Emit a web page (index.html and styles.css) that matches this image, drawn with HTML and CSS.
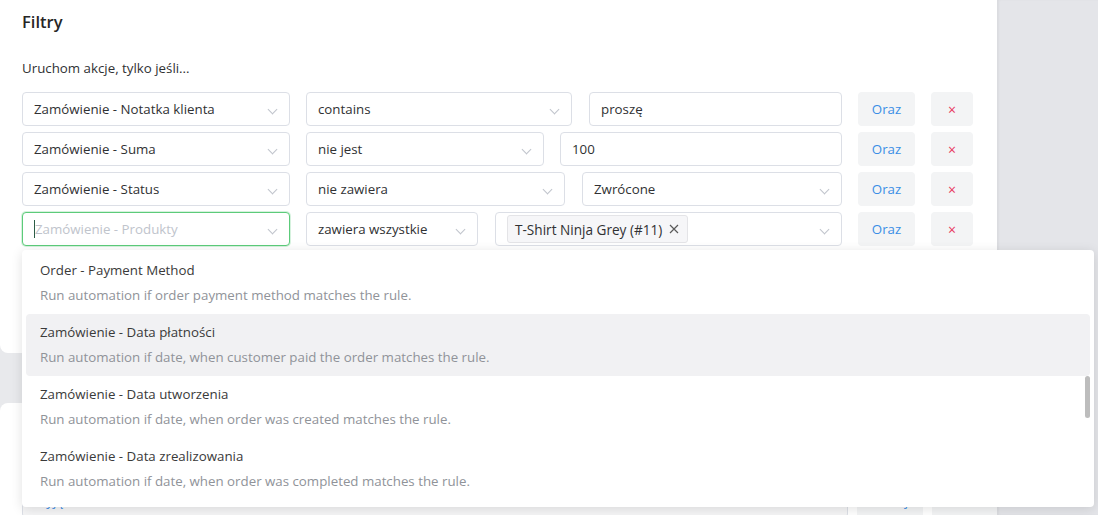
FILE: index.html
```html
<!doctype html>
<html lang="pl">
  <head>
    <meta charset="UTF-8" />
    <meta name="viewport" content="width=device-width, initial-scale=1.0" />
    <title>Filtry</title>
    <link rel="stylesheet" href="styles.css">
  </head>

  <body>
    <div class="layout">
      <main class="content">
        <section class="card card-filters">
          <h2 class="card-title">Filtry</h2>
          <p class="hint">Uruchom akcje, tylko jeśli...</p>

          <div class="rules">
            <div class="rule">
              <div class="field field-select field-subject">Zamówienie - Notatka klienta<span class="chevron"></span></div>
              <div class="field field-select op-contains">contains<span class="chevron"></span></div>
              <div class="field field-value">proszę</div>
              <button class="btn btn-and">Oraz</button>
              <button class="btn btn-remove">×</button>
            </div>

            <div class="rule">
              <div class="field field-select field-subject">Zamówienie - Suma<span class="chevron"></span></div>
              <div class="field field-select op-not">nie jest<span class="chevron"></span></div>
              <div class="field field-value">100</div>
              <button class="btn btn-and">Oraz</button>
              <button class="btn btn-remove">×</button>
            </div>

            <div class="rule">
              <div class="field field-select field-subject">Zamówienie - Status<span class="chevron"></span></div>
              <div class="field field-select op-not-contains">nie zawiera<span class="chevron"></span></div>
              <div class="field field-select field-value">Zwrócone<span class="chevron"></span></div>
              <button class="btn btn-and">Oraz</button>
              <button class="btn btn-remove">×</button>
            </div>

            <div class="rule">
              <div class="field field-select field-subject is-focused"><span class="caret"></span><span class="placeholder">Zamówienie - Produkty</span><span class="chevron"></span></div>
              <div class="field field-select op-all">zawiera wszystkie<span class="chevron"></span></div>
              <div class="field field-select field-value field-tags">
                <span class="tag">T-Shirt Ninja Grey (#11)
                  <svg class="tag-close" width="10" height="10" viewBox="0 0 10 10"><path d="M1 1L9 9M9 1L1 9" stroke="#5a5a5a" stroke-width="1.2" fill="none"/></svg>
                </span>
                <span class="chevron"></span>
              </div>
              <button class="btn btn-and">Oraz</button>
              <button class="btn btn-remove">×</button>
            </div>

            <div class="dropdown">
              <div class="option">
                <div class="option-title">Order - Payment Method</div>
                <div class="option-desc">Run automation if order payment method matches the rule.</div>
              </div>
              <div class="option is-hover">
                <div class="option-title">Zamówienie - Data płatności</div>
                <div class="option-desc">Run automation if date, when customer paid the order matches the rule.</div>
              </div>
              <div class="option">
                <div class="option-title">Zamówienie - Data utworzenia</div>
                <div class="option-desc">Run automation if date, when order was created matches the rule.</div>
              </div>
              <div class="option">
                <div class="option-title">Zamówienie - Data zrealizowania</div>
                <div class="option-desc">Run automation if date, when order was completed matches the rule.</div>
              </div>
              <div class="scroll-thumb"></div>
            </div>
          </div>
        </section>

        <section class="card card-actions">
          <div class="rule">
            <div class="field field-muted">Wyjątki</div>
            <button class="btn btn-and btn-wide">Dodaj</button>
            <button class="btn btn-and btn-wide">Usuń</button>
          </div>
        </section>
      </main>
      <aside class="sidebar"></aside>
    </div>
  </body>
</html>
```

FILE: styles.css
```css
body {
  margin: 0;
  font-family: 'Open Sans', 'Noto Sans', sans-serif;
  font-size: 13.3px;
  color: #303133;
  background: #e8e9ec;
  overflow: hidden;
}

.layout {
  display: flex;
  height: 515px;
  overflow: hidden;
}

.content {
  width: 997px;
  flex-shrink: 0;
  position: relative;
  z-index: 1;
}

.sidebar {
  flex: 1;
  background: #e4e5e9;
  box-shadow: inset 2px 0 2px rgba(0, 0, 0, 0.04);
}

.card {
  background: white;
  border-radius: 8px;
}

.card-filters {
  border-radius: 0 0 8px 8px;
  padding: 11px 24px 107px 22px;
}

.card-actions {
  margin-top: 50px;
  padding: 81px 0 20px 22px;
}

.card-title {
  margin: 0;
  font-size: 16.5px;
  font-weight: 600;
  line-height: 22px;
  color: #262626;
}

.hint {
  margin: 25px 0 14px;
  line-height: 20px;
}

.rules {
  position: relative;
  display: flex;
  flex-direction: column;
  gap: 6px;
}

.rule {
  display: flex;
  gap: 16px;
}

.field {
  position: relative;
  box-sizing: border-box;
  height: 34px;
  padding: 0 30px 0 11px;
  border: 1px solid #dcdfe6;
  border-radius: 4px;
  display: flex;
  align-items: center;
  white-space: nowrap;
  background: white;
}

.field-subject {
  width: 268px;
}

.op-contains {
  width: 266px;
  margin-right: 1px;
}

.op-not {
  width: 238px;
}

.op-not-contains {
  width: 259px;
  margin-right: 1px;
}

.op-all {
  width: 172px;
  margin-right: 1px;
}

.field-value {
  flex: 1;
}

.field-tags {
  padding-left: 11px;
}

.chevron {
  position: absolute;
  right: 13px;
  top: 13px;
  width: 6px;
  height: 6px;
  border-right: 1px solid #c0c4cc;
  border-bottom: 1px solid #c0c4cc;
  transform: rotate(45deg);
}

.is-focused {
  border-color: #5ccb7a;
  box-shadow: 0 0 0 1px rgba(92, 203, 122, 0.25);
}

.caret {
  width: 1px;
  height: 18px;
  background: #2b5d46;
}

.placeholder {
  color: #c0c4cc;
}

.tag {
  display: flex;
  align-items: center;
  gap: 7px;
  height: 26px;
  padding: 0 8px 0 7px;
  background: #f6f6f8;
  border: 1px solid #e4e4e7;
  border-radius: 3px;
  color: #303133;
  font-size: 13.6px;
}

.tag-close {
  display: block;
}

.btn {
  height: 34px;
  border: none;
  border-radius: 4px;
  background: #f3f4f5;
  font-family: inherit;
  font-size: 13.3px;
  cursor: pointer;
}

.btn-and {
  width: 57px;
  color: #3a8ee6;
}

.btn-remove {
  width: 42px;
  color: #e8365d;
  font-size: 14px;
}

.btn-wide {
  width: 66px;
}

.field-muted {
  width: 826px;
  flex-shrink: 0;
  background: #f5f5f6;
  color: #3a8ee6;
}

.card-actions .rule {
  gap: 9px;
}

.dropdown {
  position: absolute;
  top: 158px;
  left: 0;
  width: 1072px;
  height: 257px;
  box-sizing: border-box;
  padding: 2px 4px;
  background: white;
  border-radius: 4px;
  box-shadow: 0 2px 12px rgba(0, 0, 0, 0.12);
  overflow: hidden;
  z-index: 10;
}

.option {
  height: 62px;
  box-sizing: border-box;
  padding: 8px 14px 0;
  border-radius: 4px;
}

.option.is-hover {
  background: #f1f1f3;
}

.option-title {
  line-height: 20px;
  color: #3a3a3a;
}

.option-desc {
  margin-top: 5px;
  line-height: 20px;
  color: #909399;
}

.scroll-thumb {
  position: absolute;
  right: 4px;
  top: 126px;
  width: 5px;
  height: 42px;
  border-radius: 3px;
  background: #bdbdbd;
}
```
